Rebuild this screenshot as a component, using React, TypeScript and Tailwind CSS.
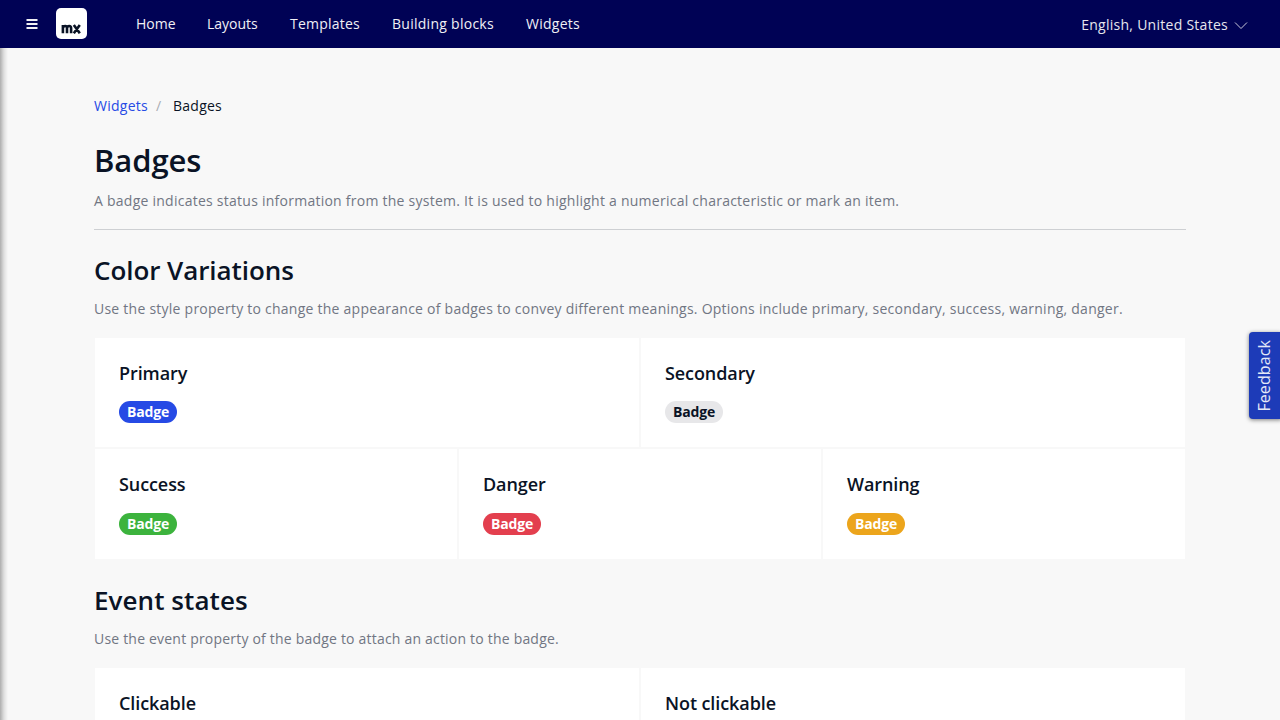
import React from "react";

function NavLink({ children, className }: { children: React.ReactNode; className: string }) {
  return <a className={"mr-8 shrink-0 text-[14px] leading-5 whitespace-nowrap text-[#f0f0f5] " + className}>{children}</a>;
}

function Cell({ title, badge, className = "h-[109px]", gap = "mt-[15px]" }: { title: string; badge?: string; className?: string; gap?: string }) {
  return (
    <div className={"flex-1 bg-white px-6 pt-[22px] " + className}>
      <h3 className="text-[18px] leading-[26px] font-semibold tracking-[-0.09px]">{title}</h3>
      {badge && (
        <span className={"block h-[22px] w-[58px] rounded-full px-2 text-[14px] leading-[22px] font-bold tracking-[-0.15px] " + gap + " " + badge}>Badge</span>
      )}
    </div>
  );
}

function Section({ title, text, titleClass, textClass }: { title: string; text: string; titleClass: string; textClass: string }) {
  return (
    <>
      <h2 className={"text-[26px] leading-9 font-semibold " + titleClass}>{title}</h2>
      <p className={"mt-[11px] text-[14px] leading-5 text-[#717683] " + textClass}>{text}</p>
    </>
  );
}

export default function App() {
  return (
    <div className="relative h-[720px] w-[1280px] overflow-hidden bg-[#f8f8f8] font-['Open_Sans',sans-serif] text-[#0a1325]">
      <header className="flex h-12 items-center bg-[#000255] pl-[26px]">
        <svg width="12" height="12" viewBox="0 0 12 12" stroke="#f0f0f5" strokeWidth="2"><path d="M.5 2h11M.5 6h11M.5 10h11" /></svg>
        <div className="ml-[18px] flex h-[31px] w-[31px] items-end justify-center self-start mt-2 rounded-[5px] bg-white pb-[5px]">
          <svg width="21" height="10" viewBox="0 0 21 10" fill="none" stroke="#0a1325" strokeWidth="2.6"><path d="M1.9 9.3V1M1.9 4Q2.3 2 4.2 2Q6 2 6 4V9.3M6 4Q6.3 2 8.2 2Q10.1 2 10.1 4.2V9.3M12.8 1l6 8.3M18.8 1l-6 8.3" /></svg>
        </div>
        <nav className="ml-[49px] flex flex-1">
          <NavLink className="w-[39px]">Home</NavLink>
          <NavLink className="w-[51px]">Layouts</NavLink>
          <NavLink className="w-[70px] tracking-[0.22px]">Templates</NavLink>
          <NavLink className="w-[102px] tracking-[0.27px]">Building blocks</NavLink>
          <NavLink className="w-[54px] tracking-[0.25px]">Widgets</NavLink>
        </nav>
        <div className="mr-8 flex items-center gap-1.5 pt-0.5 text-[14px] leading-5 tracking-[0.27px] text-[#e6e6ee]">
          English, United States
          <svg width="14" height="8" viewBox="0 0 14 8" fill="none" stroke="#c8c8da"><path d="M1 1.5l6 6 6-6" /></svg>
        </div>
      </header>
      <div className="absolute top-12 left-0 h-[672px] w-2 bg-gradient-to-r from-black/30 via-black/10 to-transparent" />
      <main className="mx-[94px] pt-12">
        <div className="flex text-[14px] leading-5 tracking-[0.25px]">
          <a className="w-[54px] text-[#264ae5]">Widgets</a>
          <span className="ml-2 w-[5px] text-[#a9acb3]">/</span>
          <span className="ml-3">Badges</span>
        </div>
        <h1 className="mt-[22px] text-[31px] leading-[44px] font-semibold tracking-[-0.1px]">Badges</h1>
        <p className="mt-[9px] text-[14px] leading-5 tracking-[0.25px] text-[#717683]">A badge indicates status information from the system. It is used to highlight a numerical characteristic or mark an item.</p>
        <hr className="mt-[18px] mb-[22px] border-[#ced0d3]" />
        <Section title="Color Variations" titleClass="tracking-[-0.07px]" textClass="tracking-[0.244px]" text="Use the style property to change the appearance of badges to convey different meanings. Options include primary, secondary, success, warning, danger." />
        <div className="mx-px mt-[19px] flex gap-0.5">
          <Cell title="Primary" badge="bg-[#264ae5] text-white" />
          <Cell title="Secondary" badge="bg-[#e7e7e9]" />
        </div>
        <div className="mx-px mt-0.5 mb-[23px] flex gap-0.5">
          <Cell title="Success" badge="bg-[#3cb33d] text-white" className="h-[110px]" gap="mt-4" />
          <Cell title="Danger" badge="bg-[#e33f4e] text-white" className="h-[110px]" gap="mt-4" />
          <Cell title="Warning" badge="bg-[#eca51c] text-white" className="h-[110px]" gap="mt-4" />
        </div>
        <Section title="Event states" titleClass="tracking-[0.07px]" textClass="tracking-[0.2px]" text="Use the event property of the badge to attach an action to the badge." />
        <div className="mx-px mt-[19px] flex gap-0.5">
          <Cell title="Clickable" className="h-[52px]" />
          <Cell title="Not clickable" className="h-[52px]" />
        </div>
      </main>
      <button className="absolute top-[332px] right-[-3px] flex h-[87px] w-[34px] items-center justify-center rounded-[4px] bg-[#1d3bb8] pr-[5px] text-[16px] leading-5 tracking-[0.1px] text-[#e4e8f7] shadow-[0_1px_4px_rgba(0,0,0,0.5)]">
        <span className="rotate-180 [writing-mode:vertical-rl]">Feedback</span>
      </button>
    </div>
  );
}
